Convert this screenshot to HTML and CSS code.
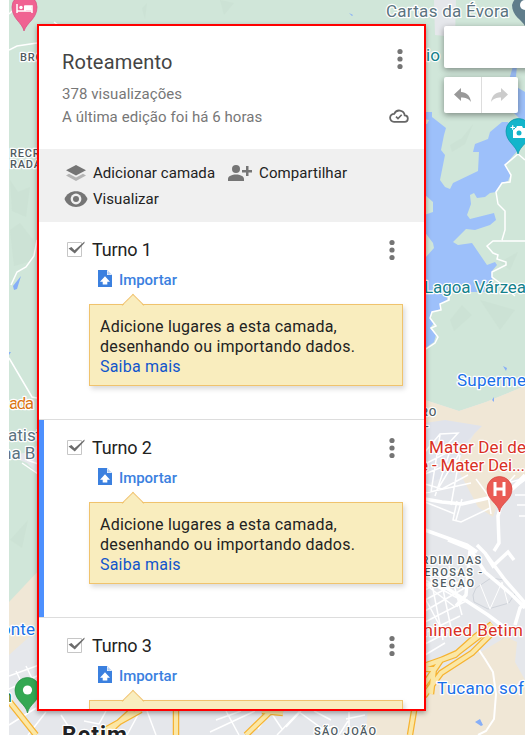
FILE: index.html
```html
<!DOCTYPE html>
<html lang="pt-BR">
<head>
<meta charset="utf-8">
<title>Roteamento</title>
<link rel="stylesheet" href="styles.css">
</head>
<body>
<svg class="map" viewBox="9 0 516 735" width="516" height="735" aria-hidden="true">
  <rect x="9" width="516" height="735" fill="#d0e6d9"/>
  <!-- relief -->
  <g fill="#c9dfd2" opacity=".6">
    <path d="M10 230l10-7 14 18-2 20-18 5zM10 180l8 12 12-5-4 30-14-6zM142 8l5-5-2 16zM220 0l14 3-10 12zM450 145l12-7 11-14-8 20-13 8zM500 262l18-10-8 18zM450 320l12-15 10 10-18 16zM480 300l35 10-15 20zM10 540l18-20-6 28z"/>
  </g>
  <!-- towns and open land -->
  <path d="M9 456l18 7 14 14v-35l-12 10zM434 0h22l-1 37-20-2z" fill="#e5e7eb"/>
  <path d="M9 602l32-34v70L9 665z" fill="#f0e7d6"/>
  <path d="M425 400l34 11 27-9 39-16v349H9v-80l20-18 12-2h384z" fill="#e5e7eb"/>
  <path d="M425 400l34 11 27-9 39-16v90l-20 6-12 35-15-10-22-41 18-32-10-6-39-4z" fill="#f0e7d6"/>
  <path d="M368 706l55-22 51-28 32-19 11 5-2 20 10 18v55H366z" fill="#f0e7d6"/>
  <path d="M425 423l20-3 37 6-16 16-11 30-30 13z" fill="#e0e3eb"/>
  <!-- lake -->
  <path d="M424 112H432V117L446 128L444 135L441 150L445 155L440 180L445 187L450 189L453 183L478 171L479 152L473 152L475 144L488 139L490 132L502 122H508L520 148L505 165L511 174L508 181L502 183L496 192L490 193L485 197L477 198L474 193L470 195L471 204L467 215L470 219L494 213L496 220L490 225L475 230L466 229L453 242L458 245L472 243L487 265L495 262L497 265L492 271L493 292H447V300L440 304L441 309L432 312L430 318L434 323L430 328L436 335L434 342L424 349Z" fill="#9dc0fa"/>
  <path d="M513 66h4l-2 20 10 6v32l-12-12-6-18 2-14z" fill="#9dc0fa"/>
  <path d="M424 194L433 202V212L424 215ZM424 231L433 243L434 248L426 257ZM424 119l5 1-2 4h-3z" fill="#d0e6d9"/>
  <path d="M13 286l8-10-4 13-3 1zM9 355v-3l2 0zM349 13l4 2-1 1zM503 366l4 2-1 3zM492 400l2-3v5zM475 722l5-3 3 6-2 1z" fill="#86aef7"/>
  <!-- minor streets -->
  <g fill="none" stroke="#fff" stroke-width="1.5">
    <path d="M9 50l8-4 20-3M9 14l12-11M54 22l4 3M37 240l-3 16-8 11-9 5-6 13M9 358l23 39 5 1"/>
    <path d="M525 160L518 154L505 165L511 175L510 182L502 183L496 192L498 204L505 211V230L502 240M525 241H493L487 246L493 253L498 255L497 259L506 262V265L492 272V277L500 283L515 296M449 293V300L440 304L441 310L432 312L430 318L436 326L431 328L438 337L435 343L426 349"/>
    <path d="M27 460l14 5M22 463l19 13M9 676l30-11M9 689l30-14M16 671l10 21M26 666l12 25M9 725l27-17M28 735l18-23M74 735l-13-20M140 711l-13 24M106 711l-7 13-15-3M147 711l9 24M216 720l25-9M210 732l45-21M226 711l13 24M258 729l12-18 12 18M277 735l22-23 32 23M301 711l-15 16M331 720l-17-9M346 719l19-4M349 735v-23M339 735l9-14M319 731l15-5"/>
    <path d="M425 452l15-18 18-1-20 22M425 464l27-14 7 4-20 33M425 474l34-14M425 484l17 5 26-14M440 435l-9 57M450 451l-15 45M460 455l-9 50M425 493l46-10M457 501l-4 19 8 2 29-14M462 499l-6 21M476 479l12 16 3 19M425 502l30 12M425 590l34-20M425 600l39-21M425 611l43-25M425 622l43-22M425 633l35-17M425 644l23-12M425 655l20-12M430 574l13 66M439 570l12 58M449 566l13 49M425 598l17 32M426 585l29 22M425 580l36 20"/>
    <path d="M473 595l3-7 15-10 13 2 12 12-7 11-21 6-14-7z" stroke="#cfd3da" stroke-width="1"/>
    <path d="M480 584l10 25 12-27 6 22" stroke-width="1"/>
    <path d="M515 475l-7 8 17-5M510 490l15-10M515 495h10M517 505h8M519 516h6"/>
  </g>
  <!-- main streets -->
  <g fill="none" stroke="#fff" stroke-width="3.5">
    <path d="M425 499l17 3 20 2 22-5 24-6 17-15M525 475l-22 23-5 18 1 27-5 8M425 530l25 9 17 6 10 7M448 540l22 9 15 23 26 22 14 14M477 545l8 8 8 13 15-14 6 8M470 550l-4 45-10 11M425 584l20 3 43 28 20 15M485 553l20 27 20 23M515 625l5-17 5-5"/>
    <path d="M477 647l8 12 8 13 3 22-2 25-8 12-8 4" stroke-width="2"/>
  </g>
  <!-- motorways -->
  <g fill="none" stroke="#f6b332" stroke-width="6.500">
    <path d="M424 666l31-11 20-18 17-13M424 696l17-23 31-20 20-20M424 669h10l-3 25M424 685l17-25 16-7 30-23M9 701l27 34M96 735l45-25M105 735l33-30M246 735l32-31M176 710v25M410 735l5-30M262 711l21 2"/>
  </g>
  <g fill="none" stroke="#fbe7a5" stroke-width="4">
    <path d="M424 666l31-11 20-18 17-13M424 696l17-23 31-20 20-20M424 669h10l-3 25M424 685l17-25 16-7 30-23M9 701l27 34M96 735l45-25M105 735l33-30M246 735l32-31M176 710v25M410 735l5-30M262 711l21 2"/>
  </g>
  <!-- labels -->
  <g class="map-labels">
    <g class="place">
      <text x="20" y="61">BRO</text>
      <text x="10" y="157">RECR</text>
      <text x="10" y="168">RADA</text>
      <text x="414" y="416">ERO</text><text x="425" y="430">-</text>
      <text x="413" y="564" textLength="69">ARDIM DAS</text>
      <text x="416" y="576" textLength="67">TEROSAS -</text>
      <text x="418" y="587" textLength="57">A SECAO</text>
      <text x="314" y="735" textLength="63">SÃO JOÃO</text>
    </g>
    <text x="386" y="17" textLength="123" fill="#5b7380">Cartas da Évora</text>
    <text x="416" y="61" textLength="24" fill="#14818b">dio</text>
    <text x="424" y="293" textLength="102" fill="#14818b">Lagoa Várzea</text>
    <text x="457" y="386" textLength="69" fill="#1a6fe8">Superme</text>
    <text x="429" y="453" textLength="97" fill="#d93025">Mater Dei de</text>
    <text x="419" y="471" textLength="106" fill="#d93025">e - Mater Dei...</text>
    <text x="412" y="636" textLength="111" fill="#d93025">Unimed Betim</text>
    <text x="437" y="694" textLength="87" fill="#1a6fe8">Tucano sof</text>
    <text x="9" y="409" textLength="25" fill="#db7411">ada</text>
    <text x="8" y="441" fill="#5b7380">atist</text>
    <text x="2" y="459" fill="#5b7380">na B</text>
    <text x="1" y="635" textLength="34" fill="#1a73e8">onte</text>
    <text x="-3" y="702" fill="#188038">m</text>
    <text class="city" x="62" y="743" textLength="65">Betim</text>
  </g>
  <!-- pins -->
  <path d="M24 31C22 22 12 19 12 7a12.500 12.500 0 0 1 25 0C37 19 27 22 24 31z" fill="#f06292" stroke="#d84a7c" stroke-width=".7"/>
  <path d="M17 4v9M17 11h15v2M32 11V6h-7v5" fill="none" stroke="#fff" stroke-width="1.500"/><path d="M24 6h7l1 4h-8z" fill="#fff"/><circle cx="21" cy="7.500" r="1.700" fill="#fff"/>
  <path d="M525 26c-3-6-13-10-13-21a13 13 0 0 1 13-10z" fill="#607d8b"/><circle cx="525" cy="5" r="5" fill="#fff"/>
  <path d="M518 154c-2-9-12-12-12-23a12.500 12.500 0 0 1 25 0c0 11-11 14-13 23z" fill="#12b5cb" stroke="#0793a5" stroke-width=".7"/>
  <path d="M513 128h3l1-2h5l1 2h3v10h-13z" fill="#fff"/><circle cx="519" cy="133" r="2.500" fill="#12b5cb"/><path d="M510.500 127.500h4.500M512.700 125.300v4.500" stroke="#12b5cb" stroke-width="3"/><path d="M510.500 127.500h4.500M512.700 125.300v4.500" stroke="#fff" stroke-width="1.200"/>
  <path d="M499.500 512c-1.500-9-12.500-12-12.500-23a12.500 12.500 0 0 1 25 0c0 11-11 14-12.500 23z" fill="#ea5b54" stroke="#d6403a" stroke-width=".7"/>
  <path d="M495 482v14M504 482v14M495 489h9" stroke="#fff" stroke-width="3" fill="none"/>
  <path d="M27.500 713c-1.500-9-12.500-12-12.500-23a12.500 12.500 0 0 1 25 0c0 11-11 14-12.500 23z" fill="#34a853" stroke="#258c40" stroke-width=".7"/><circle cx="27.500" cy="690" r="4.600" fill="#fff"/>
</svg>

<svg class="symbols" aria-hidden="true">
  <symbol id="more" viewBox="0 0 8 22"><circle cx="4" cy="3.500" r="2.600"/><circle cx="4" cy="11" r="2.600"/><circle cx="4" cy="18.500" r="2.600"/></symbol>
  <symbol id="check" viewBox="0 0 20 18"><path d="M1.500 2.500h14v14h-14z" fill="#fff" stroke="#c6c6c6"/><path d="M2.500 8.500l3-1.500 3 3.200L18.500 1.500V3L8.800 13.500z" fill="#6c6c6c"/></symbol>
  <symbol id="import" viewBox="0 0 14 17"><path d="M0 0h9l5 5v12H0z" fill="#3b80df"/><path d="M9 0v5h5z" fill="#fff"/><path d="M9.500 1.200v3.400h3.400z" fill="#a9c8f2"/><path d="M7 6.300l5 5.400H9.300v2.800H4.700v-2.800H2z" fill="#fff"/></symbol>
</svg>

<main class="panel">
  <header class="head">
    <div class="row"><h1>Roteamento</h1><svg class="more"><use href="#more"/></svg></div>
    <p class="views">378 visualizações</p>
    <div class="row"><p class="edited">A última edição foi há 6 horas</p>
      <svg class="cloud" viewBox="0 0 20 14" fill="none" stroke="#666"><path d="M5 12.800h10.500a3.200 3.200 0 0 0 .2-6.400A5.500 5.500 0 0 0 5.200 4.800 4 4 0 0 0 5 12.800z" stroke-width="1.800"/><path d="M7 7.600l2 2 3.700-3.800" stroke-width="1.600"/></svg>
    </div>
  </header>
  <nav class="tools">
    <a class="tool add"><svg class="tool-icon" viewBox="0 0 24 18"><path d="M2 11.500L12 17l10-5.500-3-1.700-7 3.700-7-3.700z" fill="#b5b5b5"/><path d="M12 1l10 5.200-10 5.300L2 6.200z" fill="#757575"/></svg><span>Adicionar camada</span></a>
    <a class="tool share"><svg class="tool-icon" viewBox="0 0 24 18" fill="#757575"><circle cx="8" cy="5" r="4"/><path d="M0 17v-2c0-6 16-6 16 0v2zM18 2h2.500v4H24v2.500h-3.500V12H18V8.500h-4V6h4z"/></svg><span>Compartilhar</span></a>
    <a class="tool view"><svg class="tool-icon" viewBox="0 0 24 18"><path d="M.5 9C4-1.500 20-1.500 23.500 9 20 19.500 4 19.500.5 9z" fill="#757575"/><circle cx="12" cy="9" r="5.400" fill="#f0f0f0"/><circle cx="12" cy="9" r="3" fill="#757575"/></svg><span>Visualizar</span></a>
  </nav>
  <section class="layer">
    <div class="layer-head"><svg class="check"><use href="#check"/></svg><h2>Turno 1</h2><svg class="more"><use href="#more"/></svg></div>
    <a class="import"><svg><use href="#import"/></svg><span>Importar</span></a>
    <div class="tip"><p>Adicione lugares a esta camada,</p><p>desenhando ou importando dados.</p><a>Saiba mais</a></div>
  </section>
  <section class="layer selected">
    <div class="layer-head"><svg class="check"><use href="#check"/></svg><h2>Turno 2</h2><svg class="more"><use href="#more"/></svg></div>
    <a class="import"><svg><use href="#import"/></svg><span>Importar</span></a>
    <div class="tip"><p>Adicione lugares a esta camada,</p><p>desenhando ou importando dados.</p><a>Saiba mais</a></div>
  </section>
  <section class="layer">
    <div class="layer-head"><svg class="check"><use href="#check"/></svg><h2>Turno 3</h2><svg class="more"><use href="#more"/></svg></div>
    <a class="import"><svg><use href="#import"/></svg><span>Importar</span></a>
    <div class="tip"></div>
  </section>
</main>

<aside class="controls">
  <div class="search"></div>
  <div class="history">
    <button><svg viewBox="0 0 17 15"><path d="M7 0v4c5 .2 9 3 10 10-2.500-3.500-5.500-4.500-10-4.500V13L0 6.500z" fill="#999"/></svg></button>
    <button><svg viewBox="0 0 17 15"><path d="M10 0v4C5 4.200 1 7 0 14c2.500-3.500 5.500-4.500 10-4.500V13l7-6.500z" fill="#ccc"/></svg></button>
  </div>
</aside>
</body>
</html>
```
FILE: styles.css
```css
* { box-sizing: border-box; }
body {
  margin: 0;
  height: 735px;
  overflow: hidden;
  position: relative;
  padding: 24px 0 0 37px;
  background: #fff;
  font-family: Roboto, "Liberation Sans", sans-serif;
  color: #222;
  display: flex;
  align-items: flex-start;
}
h1, h2, p { margin: 0; font-weight: 400; }
.map { position: absolute; left: 9px; top: 0; z-index: -1; }
.map-labels { font-size: 17px; paint-order: stroke; stroke: #fff; stroke-width: 2.5px; stroke-linejoin: round; }
.place { font-size: 11px; font-weight: 500; fill: #505b62; letter-spacing: .8px; }
.city { font-size: 23px; font-weight: 700; fill: #202124; }
.symbols { position: absolute; width: 0; height: 0; }

.panel {
  flex: none;
  width: 389px;
  height: 687px;
  overflow: hidden;
  border: 2px solid #f00;
  background: #fff;
  box-shadow: 0 2px 5px rgba(0, 0, 0, .35);
}
.head { height: 123px; padding: 22px 15px 0 23px; color: #777; font-size: 15px; }
.row { display: flex; justify-content: space-between; }
h1 { font-size: 20px; line-height: 28px; color: #444; letter-spacing: .2px; }
.more { width: 8px; height: 22px; fill: #757575; flex: none; }
.head .more { margin-right: 5px; }
.views { line-height: 23px; margin-top: 7px; letter-spacing: .06px; }
.edited { line-height: 23px; letter-spacing: .07px; }
.cloud { width: 20px; height: 14px; margin-top: 3px; }

.tools {
  height: 73px;
  background: #f0f0f0;
  padding: 11px 0 0 25px;
  display: flex;
  flex-wrap: wrap;
  align-content: flex-start;
  column-gap: 13px;
  font-size: 15px;
  letter-spacing: .06px;
}
.tool { display: flex; align-items: center; height: 26px; }
.tool-icon { width: 24px; height: 18px; margin-right: 5px; }
.share .tool-icon { margin-right: 7px; }

.layer { height: 198px; border-bottom: 1px solid #ddd; padding: 16px 20px 0 27px; }
.selected { box-shadow: inset 5px 0 #4d90fe; }
.layer-head { display: flex; height: 24px; align-items: center; }
.check { width: 20px; height: 18px; margin-bottom: 3px; }
h2 { font-size: 18px; line-height: 22px; margin: 0 0 0 6px; flex: 1; letter-spacing: -.15px; }
.layer-head .more { margin-right: 8px; }
.import { display: flex; align-items: center; gap: 7px; height: 34px; padding: 2px 0 0 32px; color: #3b80df; font-size: 15px; font-weight: 500; letter-spacing: -.05px; }
.import svg { width: 14px; height: 17px; margin-bottom: 3px; }
.tip {
  position: relative;
  height: 82px;
  margin: 8px 1px 0 23px;
  padding: 12px 10px;
  border: 1px solid #f0c36d;
  background: #f9edbe;
  box-shadow: 2px 3px 5px rgba(0, 0, 0, .15);
  font-size: 16px;
  line-height: 20px;
  letter-spacing: .21px;
  white-space: nowrap;
}
.tip::before {
  content: "";
  position: absolute;
  left: 35px;
  top: -8px;
  width: 15px;
  height: 15px;
  border: solid #f0c36d;
  border-width: 1px 0 0 1px;
  background: linear-gradient(135deg, #f9edbe 50%, transparent 50%);
  transform: rotate(45deg);
}
.tip a { color: #15c; display: block; }

.controls { flex: none; width: 90px; margin: 2px 0 0 18px; display: flex; flex-direction: column; gap: 9px; }
.search { height: 42px; background: #fff; border-radius: 2px; box-shadow: 0 2px 6px rgba(0, 0, 0, .4); }
.history { width: 74px; height: 36px; display: flex; background: #fff; border-radius: 2px; box-shadow: 0 2px 6px rgba(0, 0, 0, .4); }
button { flex: 1; border: 0; padding: 4px 0 0; background: none; }
button + button { border-left: 1px solid #ddd; }
button svg { width: 17px; height: 15px; }
```
